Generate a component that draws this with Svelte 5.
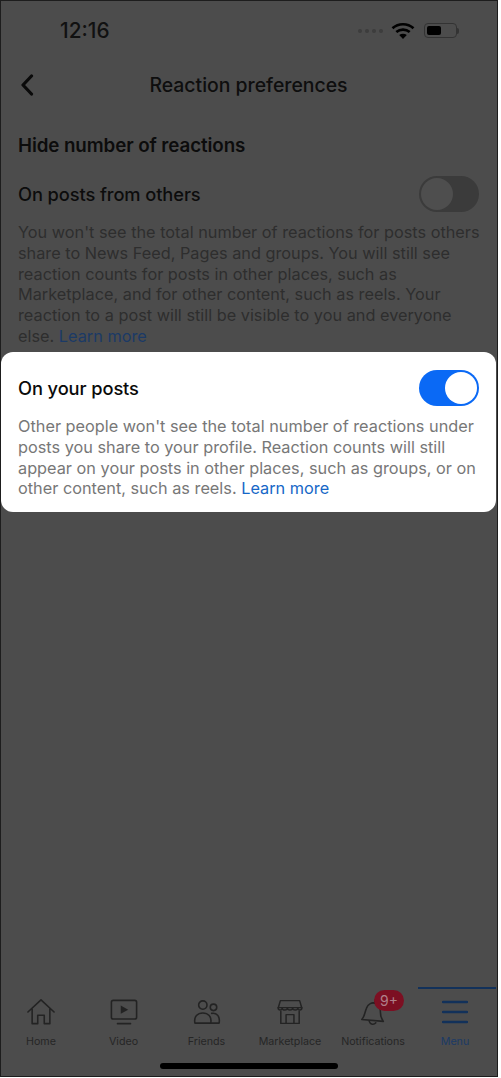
<script>
  const tabs = [
    { id: 'home', label: 'Home' },
    { id: 'video', label: 'Video' },
    { id: 'friends', label: 'Friends' },
    { id: 'market', label: 'Marketplace' },
    { id: 'bell', label: 'Notifications' },
    { id: 'menu', label: 'Menu' }
  ];
</script>

<div class="screen">
  <header class="status">
    <span class="time">12:16</span>
    <div class="status-right">
      <span class="dots"><i></i><i></i><i></i><i></i></span>
      <svg class="wifi" width="24" height="18" viewBox="0 0 24 18"><path d="M1.500 6.200C7.500.9 16.500.9 22.500 6.200" fill="none" stroke="#000" stroke-width="2.700"/><path d="M5.300 10C9.200 6.800 14.800 6.800 18.700 10" fill="none" stroke="#000" stroke-width="2.700"/><path d="M12 17l-3.800-4c2.200-1.700 5.400-1.700 7.600 0z" fill="#000"/></svg>
      <span class="battery"><b></b></span><span class="nub"></span>
    </div>
  </header>

  <nav class="nav">
    <svg class="back" width="14" height="22" viewBox="0 0 14 22"><path d="M11.500 2 3 11l8.500 9" fill="none" stroke="#0a0a0a" stroke-width="3.200" stroke-linecap="round" stroke-linejoin="round"/></svg>
    <h1>Reaction preferences</h1>
  </nav>

  <section class="dim">
    <h2>Hide number of reactions</h2>
    <div class="row">
      <span class="name">On posts from others</span>
      <span class="switch off"><i></i></span>
    </div>
    <p>You won't see the total number of reactions for posts others share to News Feed, Pages and groups. You will still see reaction counts for posts in other places, such as Marketplace, and for other content, such as reels. Your reaction to a post will still be visible to you and everyone else. <a href="#a">Learn more</a></p>
  </section>

  <section class="card">
    <div class="row">
      <span class="name">On your posts</span>
      <span class="switch on"><i></i></span>
    </div>
    <p>Other people won't see the total number of reactions under posts you share to your profile. Reaction counts will still appear on your posts in other places, such as groups, or on other content, such as reels. <a href="#b">Learn more</a></p>
  </section>

  <footer class="tabs">
    {#each tabs as tab}
      <div class="tab" class:active={tab.id === 'menu'}>
        <span class="icon">
          {#if tab.id === 'home'}
            <svg width="30" height="28" viewBox="0 0 32 30"><path d="M2 15 16 2l14 13M6.500 11.500V27.500H12.500V18.500H19.500V27.500H25.500V11.500" /></svg>
          {:else if tab.id === 'video'}
            <svg width="30" height="28" viewBox="0 0 32 30"><rect x="2.500" y="2.500" width="27" height="20" rx="2"/><path class="solid" d="M12.500 8l8 4.500-8 4.500z"/><path d="M9 27.500H23"/></svg>
          {:else if tab.id === 'friends'}
            <svg width="30" height="26" viewBox="0 0 32 28"><circle cx="11.500" cy="6.500" r="4.500"/><circle cx="23" cy="9" r="3.500"/><path d="M3 26c-1.500-7 3-11 8.500-11s10 4 8.500 11z"/><path d="M21 15.500c5-1 9.500 3 8 10.500h-9"/></svg>
          {:else if tab.id === 'market'}
            <svg width="28" height="28" viewBox="0 0 32 32"><path d="M5 3h22l2.500 8.500c0 3-4.500 3-4.500 0 0 3-6 3-6 0 0 3-6 3-6 0 0 3-6 3-6 0 0 3-4.500 3-4.500 0z"/><path d="M2.500 11h27M5.500 15v14h21V15M11.500 29V19h9v10"/></svg>
          {:else if tab.id === 'bell'}
            <svg width="30" height="30" viewBox="0 0 32 32"><path d="M4 24c3-3 3-7 5-12 1.500-4.500 6-7 10-5 4 2 5 6 5 10 0 3 1 6 3 9z" /><path d="M12 26c1 3.500 5 4 7 1.500"/><circle cx="20" cy="4.500" r="2"/></svg>
            <span class="badge">9+</span>
          {:else}
            <svg width="26" height="24" viewBox="0 0 26 24"><path d="M1 2H25M1 12H25M1 22H25"/></svg>
          {/if}
        </span>
        <span class="label">{tab.label}</span>
      </div>
    {/each}
    <span class="home-bar"></span>
  </footer>
</div>

<style>
  :global(body) {
    margin: 0;
    background: #fff;
  }
  .screen {
    width: 498px;
    height: 1077px;
    box-sizing: border-box;
    border: 1px solid #1d1d1d;
    background: #4c4c4c;
    display: flex;
    flex-direction: column;
    font-family: Inter, "Liberation Sans", sans-serif;
    color: #0c0c0c;
    overflow: hidden;
  }
  .status {
    height: 56px;
    flex: none;
    display: flex;
    justify-content: space-between;
    align-items: center;
    padding: 3px 38px 0 59px;
    box-sizing: border-box;
  }
  .time {
    font-size: 20.800px;
    font-weight: 500;
    color: #111;
  }
  .status-right {
    display: flex;
    align-items: center;
  }
  .dots {
    display: flex;
    gap: 3px;
    margin-right: 8px;
  }
  .dots i {
    width: 4px;
    height: 4px;
    border-radius: 50%;
    background: #3d3d3d;
  }
  .wifi {
    margin-right: 9px;
  }
  .battery {
    width: 33px;
    height: 15px;
    box-sizing: border-box;
    border: 1px solid #333;
    border-radius: 4px;
    padding: 2px;
    display: flex;
  }
  .battery b {
    width: 14px;
    background: #000;
    border-radius: 2px;
  }
  .nub {
    width: 2px;
    height: 6px;
    background: #333;
    border-radius: 0 2px 2px 0;
  }
  .nav {
    height: 56px;
    flex: none;
    position: relative;
    display: flex;
    align-items: center;
    justify-content: center;
  }
  .back {
    position: absolute;
    left: 19px;
    top: 17px;
  }
  h1 {
    margin: 0 1px 1px 0;
    font-size: 19.400px;
    font-weight: 500;
    color: #0e0e0e;
  }
  .dim {
    flex: none;
    height: 239px;
    padding: 21px 15px 0 17px;
    box-sizing: border-box;
  }
  h2 {
    margin: 0 0 18px;
    font-size: 18.800px;
    line-height: 24px;
    font-weight: 600;
    color: #0c0c0c;
    letter-spacing: -0.1px;
  }
  .row {
    display: flex;
    align-items: center;
    justify-content: space-between;
    height: 36px;
    margin-right: 2px;
  }
  .dim .row {
    margin-right: 3px;
  }
  .name {
    font-size: 18.300px;
    font-weight: 500;
    letter-spacing: -0.1px;
  }
  .switch {
    width: 60px;
    height: 36px;
    border-radius: 18px;
    box-sizing: border-box;
    padding: 2px;
    display: flex;
  }
  .switch i {
    width: 32px;
    height: 32px;
    border-radius: 50%;
  }
  .switch.off {
    background: #3b3b3b;
  }
  .switch.off i {
    background: #4e4e4e;
  }
  .switch.on {
    background: #0a69f5;
    justify-content: flex-end;
  }
  .switch.on i {
    background: #fff;
  }
  p {
    margin: 10px 0 0;
    font-size: 16.300px;
    line-height: 20.800px;
    color: #2e2e2e;
  }
  p a {
    color: #1b3a66;
    text-decoration: none;
  }
  .card {
    flex: none;
    width: 495px;
    height: 160px;
    padding: 18px 15px 0 17px;
    box-sizing: border-box;
    background: #fff;
    border-radius: 12px;
    color: #0a0a0a;
  }
  .card p {
    color: #777;
  }
  .card p a {
    color: #1667c7;
  }
  .tabs {
    margin-top: auto;
    height: 89px;
    flex: none;
    position: relative;
    display: grid;
    grid-template-columns: 80px 85px 81px 86px 80px 1fr;
  }
  .tab {
    display: flex;
    flex-direction: column;
    align-items: center;
    padding-top: 8px;
    position: relative;
  }
  .tab.active::before {
    content: "";
    position: absolute;
    top: 0;
    left: 5px;
    right: 1px;
    height: 2px;
    background: #12315a;
  }
  .icon {
    height: 34px;
    position: relative;
    display: flex;
    align-items: center;
  }
  .icon svg {
    fill: none;
    stroke: #232323;
    stroke-width: 1.700;
    stroke-linejoin: round;
    stroke-linecap: round;
  }
  .icon svg .solid {
    fill: #232323;
    stroke: none;
  }
  .active .icon svg {
    stroke: #12315a;
    stroke-width: 2.400;
  }
  .badge {
    position: absolute;
    left: 16px;
    top: -5px;
    width: 30px;
    height: 21px;
    border-radius: 11px;
    background: #7c0f22;
    color: #b0808a;
    font-size: 14px;
    line-height: 21px;
    text-align: center;
  }
  .label {
    margin-top: 6px;
    font-size: 10.700px;
    line-height: 14px;
    color: #262626;
    white-space: nowrap;
  }
  .active .label {
    color: #1b3a66;
  }
  .home-bar {
    position: absolute;
    bottom: 7px;
    left: 159px;
    width: 178px;
    height: 6px;
    border-radius: 3px;
    background: #000;
  }
</style>
